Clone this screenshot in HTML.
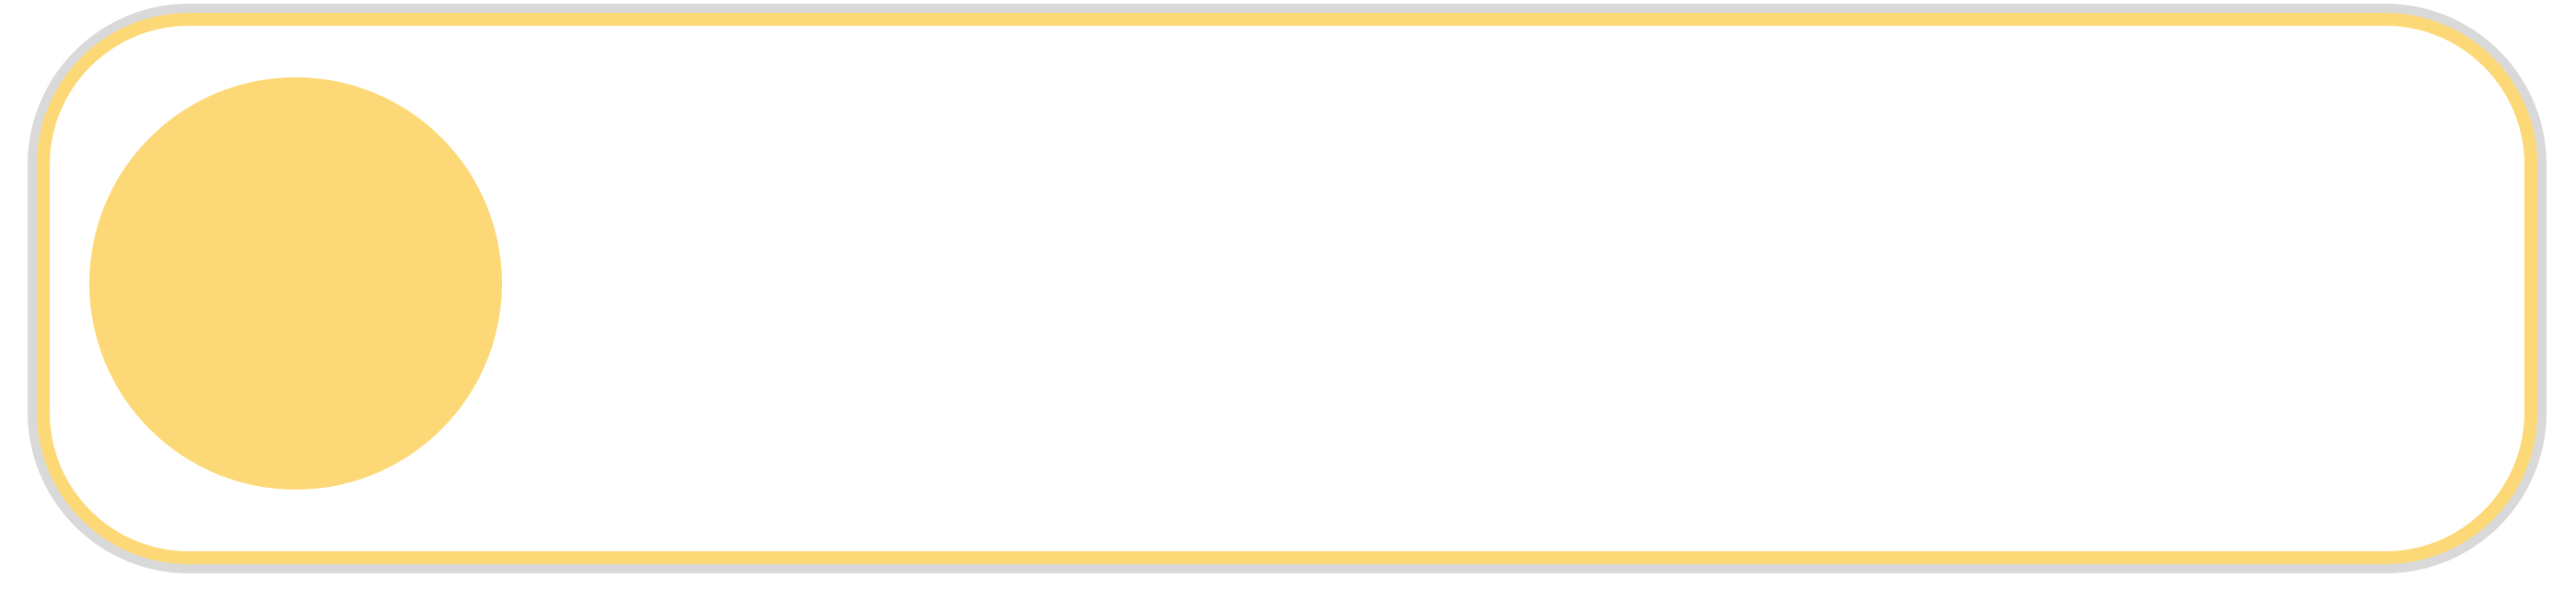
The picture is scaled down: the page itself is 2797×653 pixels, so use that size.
<!DOCTYPE html>
<html><head><style>
html,body{margin:0;padding:0;background:#fff;width:2797px;height:653px;overflow:hidden}
.box{position:absolute;left:30px;top:4px;width:2735px;height:619px;box-sizing:border-box;border:10px solid #d9d9d9;border-radius:175px;}
.inner{position:absolute;left:0;top:0;right:0;bottom:0;border:14px solid #fdd876;border-radius:165px;}
.c{position:absolute;left:97px;top:84px;width:448px;height:448px;border-radius:50%;background:#fdd876}
</style></head><body>
<div class="box"><div class="inner"></div></div>
<div class="c"></div>
</body></html>
